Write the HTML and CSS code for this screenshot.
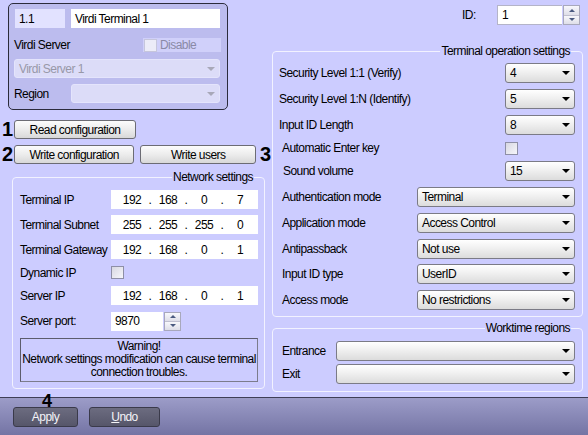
FILE: index.html
```html
<!DOCTYPE html>
<html>
<head>
<meta charset="utf-8">
<link rel="stylesheet" href="styles.css">
</head>
<body>
<div class="main">
  <div class="left">
    <div class="idbox">
      <div class="ib-row1">
        <div class="field code">1.1</div>
        <div class="field name">Virdi Terminal 1</div>
      </div>
      <div class="ib-row2">
        <span class="ib-lbl">Virdi Server</span>
        <div class="disable"><span class="check dis"></span><span>Disable</span></div>
      </div>
      <div class="ib-row3">
        <div class="combo disabled"><span class="ctext">Virdi Server 1</span><span class="arrow"></span></div>
      </div>
      <div class="ib-row4">
        <span class="ib-lbl4">Region</span>
        <div class="combo disabled"><span class="ctext"></span><span class="arrow"></span></div>
      </div>
    </div>

    <div class="btnrow first">
      <span class="num">1</span>
      <div class="btn w122">Read configuration</div>
    </div>
    <div class="btnrow second">
      <span class="num">2</span>
      <div class="btn w122">Write configuration</div>
      <div class="btn w117">Write users</div>
      <span class="num num3">3</span>
    </div>

    <fieldset class="group net">
      <legend>Network settings</legend>
      <div class="rows">
        <div class="frow">
          <span class="flbl">Terminal IP</span>
          <div class="field ip"><span class="seg">192</span><span class="dot">.</span><span class="seg">168</span><span class="dot">.</span><span class="seg">0</span><span class="dot">.</span><span class="seg">7</span></div>
        </div>
        <div class="frow">
          <span class="flbl">Terminal Subnet</span>
          <div class="field ip"><span class="seg">255</span><span class="dot">.</span><span class="seg">255</span><span class="dot">.</span><span class="seg">255</span><span class="dot">.</span><span class="seg">0</span></div>
        </div>
        <div class="frow">
          <span class="flbl">Terminal Gateway</span>
          <div class="field ip"><span class="seg">192</span><span class="dot">.</span><span class="seg">168</span><span class="dot">.</span><span class="seg">0</span><span class="dot">.</span><span class="seg">1</span></div>
        </div>
        <div class="frow dyn">
          <span class="flbl">Dynamic IP</span>
          <span class="check"></span>
        </div>
        <div class="frow">
          <span class="flbl">Server IP</span>
          <div class="field ip"><span class="seg">192</span><span class="dot">.</span><span class="seg">168</span><span class="dot">.</span><span class="seg">0</span><span class="dot">.</span><span class="seg">1</span></div>
        </div>
        <div class="frow port">
          <span class="flbl">Server port:</span>
          <div class="field portf">9870</div>
          <div class="spin"><span class="up"></span><span class="down"></span></div>
        </div>
      </div>
      <div class="warning">Warning!<br>Network settings modification can cause terminal<br>connection troubles.</div>
    </fieldset>
  </div>

  <div class="right">
    <div class="idrow">
      <span class="idlbl">ID:</span>
      <div class="field idf">1</div>
      <div class="spin"><span class="up"></span><span class="down"></span></div>
    </div>

    <fieldset class="group ops">
      <legend>Terminal operation settings</legend>
      <div class="rows">
        <div class="orow h26"><span class="olbl">Security Level 1:1 (Verify)</span><div class="combo sm"><span class="ctext">4</span><span class="arrow"></span></div></div>
        <div class="orow h26"><span class="olbl">Security Level 1:N (Identify)</span><div class="combo sm"><span class="ctext">5</span><span class="arrow"></span></div></div>
        <div class="orow h26"><span class="olbl">Input ID Length</span><div class="combo sm"><span class="ctext">8</span><span class="arrow"></span></div></div>
        <div class="orow h20"><span class="olbl ind">Automatic Enter key</span><div class="chkbox"><span class="check"></span></div></div>
        <div class="orow h26"><span class="olbl ind1">Sound volume</span><div class="combo sm"><span class="ctext">15</span><span class="arrow"></span></div></div>
        <div class="orow h26"><span class="olbl ind">Authentication mode</span><div class="combo wide"><span class="ctext">Terminal</span><span class="arrow"></span></div></div>
        <div class="orow h26"><span class="olbl ind">Application mode</span><div class="combo wide"><span class="ctext">Access Control</span><span class="arrow"></span></div></div>
        <div class="orow h25"><span class="olbl ind">Antipassback</span><div class="combo wide"><span class="ctext">Not use</span><span class="arrow"></span></div></div>
        <div class="orow h26"><span class="olbl ind">Input ID type</span><div class="combo wide"><span class="ctext">UserID</span><span class="arrow"></span></div></div>
        <div class="orow h26"><span class="olbl ind">Access mode</span><div class="combo wide"><span class="ctext">No restrictions</span><span class="arrow"></span></div></div>
      </div>
    </fieldset>

    <fieldset class="group work">
      <legend>Worktime regions</legend>
      <div class="rows">
        <div class="wrow"><span class="wlbl">Entrance</span><div class="combo"><span class="ctext"></span><span class="arrow"></span></div></div>
        <div class="wrow"><span class="wlbl">Exit</span><div class="combo"><span class="ctext"></span><span class="arrow"></span></div></div>
      </div>
    </fieldset>
  </div>
</div>

<div class="bar">
  <span class="num4">4</span>
  <div class="dbtn apply">Apply</div>
  <div class="dbtn undo"><u>U</u>ndo</div>
</div>
</body>
</html>
```

FILE: styles.css
```css
* { box-sizing: border-box; }

html, body { margin: 0; padding: 0; }

body {
  width: 588px;
  height: 435px;
  overflow: hidden;
  background: #ccccff;
  color: #000;
  font-family: "Liberation Sans", Arial, sans-serif;
  font-size: 12px;
  letter-spacing: -0.55px;
  line-height: 14px;
}

.main { display: flex; height: 397px; }
.left { width: 272px; flex: none; }
.right { width: 311px; flex: none; }

/* generic fields */
.field {
  background: #fff;
  height: 19px;
  display: flex;
  align-items: center;
  padding-left: 4px;
  white-space: nowrap;
}

.check {
  display: inline-block;
  width: 13px;
  height: 13px;
  border: 1px solid #8e8fa6;
  background: linear-gradient(135deg, #d8d8e2, #f6f6fa);
  flex: none;
}
.check.dis { border-color: #c6c6dc; background: #ececf8; }

.combo {
  height: 19px;
  border: 1px solid #7b7b86;
  border-radius: 3px;
  background: linear-gradient(#ffffff, #f0f0f0 45%, #dcdcdc);
  display: flex;
  align-items: center;
  padding-left: 4px;
  position: relative;
}
.combo .ctext { flex: 1; white-space: nowrap; }
.combo .arrow {
  width: 0; height: 0;
  border-left: 4px solid transparent;
  border-right: 4px solid transparent;
  border-top: 4px solid #000;
  margin-right: 4px;
}
.combo.disabled {
  background: #dcdcf8;
  border-color: #e4e4fc;
  color: #9898a8;
}
.combo.disabled .arrow { border-top-color: #a8a8b8; }

.spin {
  width: 17px;
  height: 19px;
  margin-left: 1px;
  border: 1px solid #a8a8bc;
  background: #f2f2f6;
  display: flex;
  flex-direction: column;
  flex: none;
}
.spin span {
  flex: 1;
  display: flex;
  align-items: center;
  justify-content: center;
  background: linear-gradient(#f8f8fc, #dedee8);
}
.spin .up { border-bottom: 1px solid #c0c0d0; }
.spin .up::after {
  content: "";
  border-left: 3px solid transparent;
  border-right: 3px solid transparent;
  border-bottom: 3px solid #4a5a80;
}
.spin .down::after {
  content: "";
  border-left: 3px solid transparent;
  border-right: 3px solid transparent;
  border-top: 3px solid #4a5a80;
}

/* top-left identity box */
.idbox {
  margin: 3px 0 0 8px;
  width: 220px;
  height: 107px;
  border: 1px solid #2c2c3c;
  border-radius: 5px;
  background: #bcbcee;
  padding: 5px 7px 0 5px;
}
.ib-row1 { display: flex; gap: 6px; margin-left: 1px; }
.field.code { width: 50px; flex: none; background: #e2e2ff; }
.field.name { flex: 1; }
.ib-row2 { display: flex; align-items: center; height: 14px; margin-top: 10px; }
.ib-lbl { flex: 1; }
.disable {
  width: 78px;
  height: 14px;
  margin-right: -1px;
  background: #d0d0fa;
  display: flex;
  align-items: center;
  gap: 3px;
  padding-left: 1px;
  color: #8a8aa6;
}
.ib-row3 { margin-top: 7px; }
.ib-row4 { display: flex; align-items: center; margin-top: 6px; }
.ib-lbl4 { width: 57px; flex: none; }
.ib-row4 .combo { flex: 1; }

/* config buttons */
.btnrow { display: flex; align-items: center; height: 19px; padding-left: 2px; }
.btnrow.first { margin-top: 10px; }
.btnrow.second { margin-top: 6px; }
.num {
  width: 12px;
  flex: none;
  font-weight: bold;
  font-size: 20px;
  letter-spacing: 0;
  line-height: 19px;
}
.num3 { margin-left: 4px; }
.btn {
  height: 19px;
  border: 1px solid #6c6c74;
  border-radius: 3px;
  background: linear-gradient(#fcfcfc, #ececec 50%, #d8d8d8);
  display: flex;
  align-items: center;
  justify-content: center;
  white-space: nowrap;
}
.w122 { width: 122px; }
.w117 { width: 117px; margin-left: 6px; }

/* group boxes */
fieldset.group {
  margin: 0;
  border: 1px solid #f2f2ff;
  border-radius: 4px;
  min-width: 0;
}
fieldset.group legend {
  margin-left: auto;
  margin-right: 4px;
  padding: 0 1px;
  line-height: 13px;
  white-space: nowrap;
}

/* network settings */
.net {
  margin-top: 7px !important;
  margin-left: 12px !important;
  width: 253px;
  padding: 0 6px 6px 7px;
}
.net .rows { margin-top: 3px; }
.frow { display: flex; align-items: center; height: 25px; }
.frow.dyn { height: 21px; }
.frow.port { height: 26px; }
.flbl { width: 91px; flex: none; white-space: nowrap; }
.frow .field.ip { flex: 1; padding-left: 8px; }
.seg { width: 26px; text-align: center; }
.dot { width: 10px; text-align: center; }
.field.portf { width: 52px; flex: none; }

.warning {
  margin-top: 4px;
  height: 44px;
  border: 1px solid #7c7c8c;
  border-top-color: #5c5c6c;
  border-left-color: #5c5c6c;
  text-align: center;
  line-height: 13px;
  padding-top: 1px;
  white-space: nowrap;
}

/* right column */
.idrow {
  display: flex;
  align-items: center;
  justify-content: flex-end;
  height: 20px;
  margin-top: 5px;
  padding-right: 3px;
}
.idlbl { width: 35px; }
.field.idf {
  width: 65px;
  height: 20px;
  border: 1px solid #b4b4c8;
  border-right: none;
}
.idrow .spin { height: 20px; }

.ops {
  margin-top: 20px !important;
  width: 311px;
  padding: 0 7px 3px 6px;
}
.ops .rows { margin-top: 2px; }
.orow { display: flex; align-items: center; justify-content: space-between; }
.h26 { height: 26px; }
.h25 { height: 25px; }
.h20 { height: 20px; }
.olbl { white-space: nowrap; }
.olbl.ind { padding-left: 3px; }
.olbl.ind1 { padding-left: 4px; }
.combo.sm { width: 70px; height: 20px; }
.combo.wide { width: 158px; height: 20px; }
.chkbox { width: 70px; display: flex; }

.work {
  margin-top: 5px !important;
  width: 311px;
  padding: 0 7px 6px 9px;
}
.work .rows { margin-top: 4px; }
.wrow { display: flex; align-items: center; height: 23px; }
.wlbl { width: 54px; flex: none; }
.wrow .combo { flex: 1; height: 20px; }

/* bottom bar */
.bar {
  position: relative;
  height: 38px;
  border-top: 1px solid #3e3e56;
  background: linear-gradient(#9c9cc8, #7474a4);
  display: flex;
  align-items: flex-start;
  padding: 9px 0 0 13px;
}
.num4 {
  position: absolute;
  left: 42px;
  top: -5px;
  font-weight: bold;
  font-size: 18px;
  letter-spacing: 0;
  line-height: 17px;
}
.dbtn {
  height: 20px;
  border: 1px solid #3a3a4a;
  border-radius: 3px;
  background: linear-gradient(#6c6c80, #56566a);
  color: #f4f4f8;
  display: flex;
  align-items: center;
  justify-content: center;
}
.apply { width: 65px; }
.undo { width: 71px; margin-left: 11px; }
.undo u { text-decoration: underline; }
```
